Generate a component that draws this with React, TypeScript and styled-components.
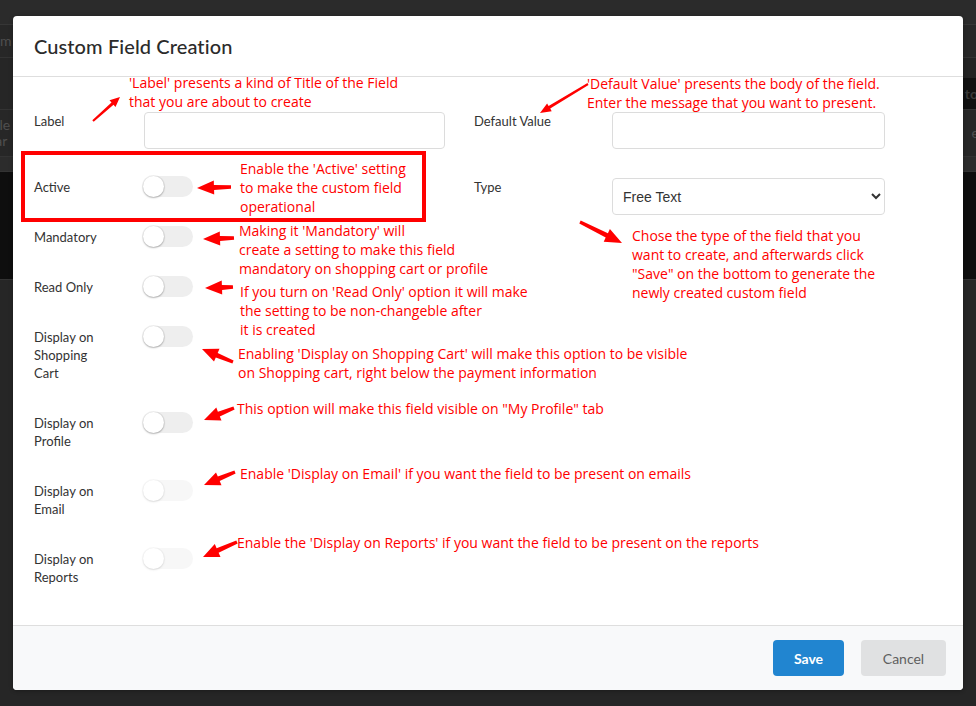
import React from "react";
import styled, { createGlobalStyle } from "styled-components";

const GlobalStyle = createGlobalStyle`
  html, body {
    margin: 0;
    padding: 0;
    background: #232323;
  }
  * {
    box-sizing: border-box;
  }
`;

type Point = [number, number];

type ArrowSpec = {
  tail: Point;
  tip: Point;
  shaft: number;
  headLength: number;
  headWidth: number;
};

type Note = {
  left: number;
  top: number;
  text: string;
};

type ToggleRow = {
  label: string;
  faded?: boolean;
};

const toggleRows: ToggleRow[] = [
  { label: "Active" },
  { label: "Mandatory" },
  { label: "Read Only" },
  { label: "Display on\nShopping\nCart" },
  { label: "Display on\nProfile" },
  { label: "Display on\nEmail", faded: true },
  { label: "Display on\nReports", faded: true },
];

const notes: Note[] = [
  { left: 129, top: 73, text: "'Label' presents a kind of Title of the Field\nthat you are about to create" },
  { left: 587, top: 74, text: "'Default Value' presents the body of the field.\nEnter the message that you want to present." },
  { left: 240, top: 159, text: "Enable the 'Active' setting\nto make the custom field\noperational" },
  { left: 239, top: 221, text: "Making it 'Mandatory' will\ncreate a setting to make this field\nmandatory on shopping cart or profile" },
  { left: 240, top: 282, text: "If you turn on 'Read Only' option it will make\nthe setting to be non-changeble after\nit is created" },
  { left: 632, top: 226, text: "Chose the type of the field that you\nwant to create, and afterwards click\n\"Save\" on the bottom to generate the\nnewly created custom field" },
  { left: 238, top: 344, text: "Enabling 'Display on Shopping Cart' will make this option to be visible\non Shopping cart, right below the payment information" },
  { left: 237, top: 399, text: "This option will make this field visible on \"My Profile\" tab" },
  { left: 240, top: 464, text: "Enable 'Display on Email' if you want the field to be present on emails" },
  { left: 237, top: 533, text: "Enable the 'Display on Reports' if you want the field to be present on the reports" },
];

const arrows: ArrowSpec[] = [
  { tail: [93, 121], tip: [120, 97], shaft: 3, headLength: 10, headWidth: 9 },
  { tail: [588, 84], tip: [540, 113], shaft: 3, headLength: 11, headWidth: 9 },
  { tail: [231, 187], tip: [197, 188], shaft: 5, headLength: 17, headWidth: 14 },
  { tail: [234, 238], tip: [203, 239], shaft: 5, headLength: 17, headWidth: 14 },
  { tail: [233, 287], tip: [205, 288], shaft: 5, headLength: 17, headWidth: 14 },
  { tail: [233, 362], tip: [202, 349], shaft: 5, headLength: 16, headWidth: 14 },
  { tail: [234, 408], tip: [204, 420], shaft: 5, headLength: 16, headWidth: 14 },
  { tail: [235, 472], tip: [204, 485], shaft: 5, headLength: 16, headWidth: 14 },
  { tail: [237, 542], tip: [203, 557], shaft: 5, headLength: 16, headWidth: 14 },
  { tail: [580, 222], tip: [622, 243], shaft: 5, headLength: 17, headWidth: 14 },
];

const arrowPoints = ({ tail, tip, shaft, headLength, headWidth }: ArrowSpec) => {
  const dx = tip[0] - tail[0];
  const dy = tip[1] - tail[1];
  const len = Math.hypot(dx, dy);
  const ux = dx / len;
  const uy = dy / len;
  const px = -uy;
  const py = ux;
  const bx = tip[0] - ux * headLength;
  const by = tip[1] - uy * headLength;
  const pts: Point[] = [
    [tail[0] + (px * shaft) / 3, tail[1] + (py * shaft) / 3],
    [bx + (px * shaft) / 2, by + (py * shaft) / 2],
    [bx + (px * headWidth) / 2, by + (py * headWidth) / 2],
    tip,
    [bx - (px * headWidth) / 2, by - (py * headWidth) / 2],
    [bx - (px * shaft) / 2, by - (py * shaft) / 2],
    [tail[0] - (px * shaft) / 3, tail[1] - (py * shaft) / 3],
  ];
  return pts.map((p) => `${p[0].toFixed(1)},${p[1].toFixed(1)}`).join(" ");
};

const App = () => {
  return (
    <Page>
      <GlobalStyle />
      <Backdrop>
        <TopStrip />
        <BgRow $height={33} $bg="#272727">
          <BgText>om</BgText>
        </BgRow>
        <BgSplit>
          <BgCell $bg="#262626" />
          <BgCell $bg="#111111" $width={90}>
            <BgHead>to</BgHead>
          </BgCell>
        </BgSplit>
        <BgRow $height={47} $bg="#272727">
          <BgText>
            ele
            <br />
            lar
          </BgText>
          <BgText>e</BgText>
        </BgRow>
        <BgRow $height={15} $bg="#2c2c2c" />
        <BgRow $height={108} $bg="#0e0e0e" />
        <BgRest />
      </Backdrop>

      <Modal>
        <Header>
          <Title>Custom Field Creation</Title>
        </Header>
        <Body>
          <Column>
            <FieldRow>
              <FieldLabel $width={110}>Label</FieldLabel>
              <TextInput $width={301} />
            </FieldRow>
            {toggleRows.map((row) => (
              <SwitchRow key={row.label}>
                <FieldLabel $width={109}>{row.label}</FieldLabel>
                <Switch $faded={row.faded}>
                  <Knob />
                </Switch>
              </SwitchRow>
            ))}
          </Column>
          <Column>
            <FieldRow>
              <FieldLabel $width={138}>Default Value</FieldLabel>
              <TextInput $width={273} />
            </FieldRow>
            <FieldRow>
              <FieldLabel $width={138}>Type</FieldLabel>
              <Select defaultValue="free">
                <option value="free">Free Text</option>
                <option value="number">Number</option>
                <option value="date">Date</option>
              </Select>
            </FieldRow>
          </Column>
        </Body>
        <Footer>
          <SaveButton>Save</SaveButton>
          <CancelButton>Cancel</CancelButton>
        </Footer>
      </Modal>

      <Highlight />

      <ArrowLayer width={976} height={706} viewBox="0 0 976 706">
        {arrows.map((a, i) => (
          <polygon key={i} points={arrowPoints(a)} fill="#ff0000" />
        ))}
      </ArrowLayer>

      {notes.map((n) => (
        <NoteText key={n.left + "-" + n.top} style={{ left: n.left, top: n.top }}>
          {n.text}
        </NoteText>
      ))}
    </Page>
  );
};

const Page = styled.div`
  position: relative;
  width: 976px;
  height: 706px;
  overflow: hidden;
  background: #232323;
  font-family: Lato, "Noto Sans", sans-serif;
`;

const Backdrop = styled.div`
  display: flex;
  flex-direction: column;
  height: 100%;
`;

const TopStrip = styled.div`
  height: 25px;
  background: #2b2b2b;
  border-bottom: 1px solid #363636;
`;

const BgRow = styled.div<{ $height: number; $bg: string }>`
  height: ${(p) => p.$height}px;
  background: ${(p) => p.$bg};
  border-bottom: 1px solid #333;
  display: flex;
  justify-content: space-between;
  align-items: center;
`;

const BgSplit = styled.div`
  display: flex;
  height: 52px;
  border-bottom: 1px solid #333;
`;

const BgCell = styled.div<{ $bg: string; $width?: number }>`
  flex: ${(p) => (p.$width ? `0 0 ${p.$width}px` : "1")};
  background: ${(p) => p.$bg};
  margin-top: ${(p) => (p.$width ? "20px" : "0")};
  display: flex;
  align-items: center;
  justify-content: flex-end;
`;

const BgText = styled.span`
  font-size: 14px;
  line-height: 16px;
  color: #4f4f4f;
  margin-left: -8px;
  margin-right: -3px;
`;

const BgHead = styled.span`
  font-size: 14px;
  font-weight: 700;
  color: #3a3a3a;
  margin-right: -2px;
`;

const BgRest = styled.div`
  flex: 1;
  background: #262626;
`;

const Modal = styled.div`
  position: absolute;
  left: 13px;
  top: 16px;
  width: 950px;
  height: 674px;
  background: #ffffff;
  border-radius: 4px;
  display: flex;
  flex-direction: column;
  overflow: hidden;
  box-shadow: 0 1px 4px rgba(0, 0, 0, 0.3);
`;

const Header = styled.div`
  height: 61px;
  padding: 0 21px;
  display: flex;
  align-items: center;
  border-bottom: 1px solid #dedede;
`;

const Title = styled.h2`
  margin: 0;
  font-family: Lato, "Noto Sans", sans-serif;
  font-size: 20px;
  font-weight: 500;
  color: #2b2b2b;
  letter-spacing: 0.1px;
`;

const Body = styled.div`
  flex: 1;
  padding: 35px 21px 0;
  display: grid;
  grid-template-columns: 411px 411px;
  column-gap: 29px;
  align-content: start;
`;

const Column = styled.div`
  display: flex;
  flex-direction: column;
`;

const FieldRow = styled.div`
  display: flex;
  align-items: flex-start;
  margin-bottom: 29px;
`;

const SwitchRow = styled.div`
  display: flex;
  align-items: flex-start;
  margin-bottom: 32px;
`;

const FieldLabel = styled.div<{ $width: number }>`
  flex: 0 0 ${(p) => p.$width}px;
  font-size: 13px;
  line-height: 18px;
  color: #333;
  white-space: pre-line;
`;

const TextInput = styled.input.attrs({ type: "text" })<{ $width: number }>`
  width: ${(p) => p.$width}px;
  height: 37px;
  border: 1px solid #dcdcdc;
  border-radius: 4px;
  background: #fff;
  outline: none;
`;

const Select = styled.select`
  width: 273px;
  height: 37px;
  padding: 0 6px;
  border: 1px solid #dcdcdc;
  border-radius: 4px;
  background: #fff;
  font-family: "Liberation Sans", Arial, sans-serif;
  font-size: 14px;
  color: #333;
  outline: none;
`;

const Switch = styled.div<{ $faded?: boolean }>`
  position: relative;
  width: 50px;
  height: 21px;
  margin-top: -2px;
  margin-bottom: -1px;
  border-radius: 11px;
  background: #eeeeee;
  opacity: ${(p) => (p.$faded ? 0.45 : 1)};
`;

const Knob = styled.span`
  position: absolute;
  left: 0;
  top: 0;
  width: 21px;
  height: 21px;
  border-radius: 50%;
  background: #ffffff;
  box-shadow: 0 1px 2px rgba(0, 0, 0, 0.25), 0 0 0 1px rgba(0, 0, 0, 0.06);
`;

const Footer = styled.div`
  height: 65px;
  border-top: 1px solid #dedede;
  background: #f8f9fa;
  display: flex;
  align-items: center;
  justify-content: flex-end;
  gap: 17px;
  padding-right: 17px;
`;

const BaseButton = styled.button`
  height: 36px;
  border: none;
  border-radius: 4px;
  font-family: Lato, "Noto Sans", sans-serif;
  font-size: 14px;
  cursor: pointer;
`;

const SaveButton = styled(BaseButton)`
  width: 71px;
  background: #2185d0;
  color: #ffffff;
  font-weight: 700;
`;

const CancelButton = styled(BaseButton)`
  width: 85px;
  background: #e0e1e2;
  color: #5f5f5f;
`;

const Highlight = styled.div`
  position: absolute;
  left: 21px;
  top: 151px;
  width: 405px;
  height: 71px;
  border: 4px solid #ff0000;
`;

const ArrowLayer = styled.svg`
  position: absolute;
  left: 0;
  top: 0;
  pointer-events: none;
`;

const NoteText = styled.div`
  position: absolute;
  font-family: "Open Sans", "Noto Sans", sans-serif;
  font-size: 14px;
  line-height: 19px;
  color: #ff0000;
  white-space: pre;
`;

export default App;
